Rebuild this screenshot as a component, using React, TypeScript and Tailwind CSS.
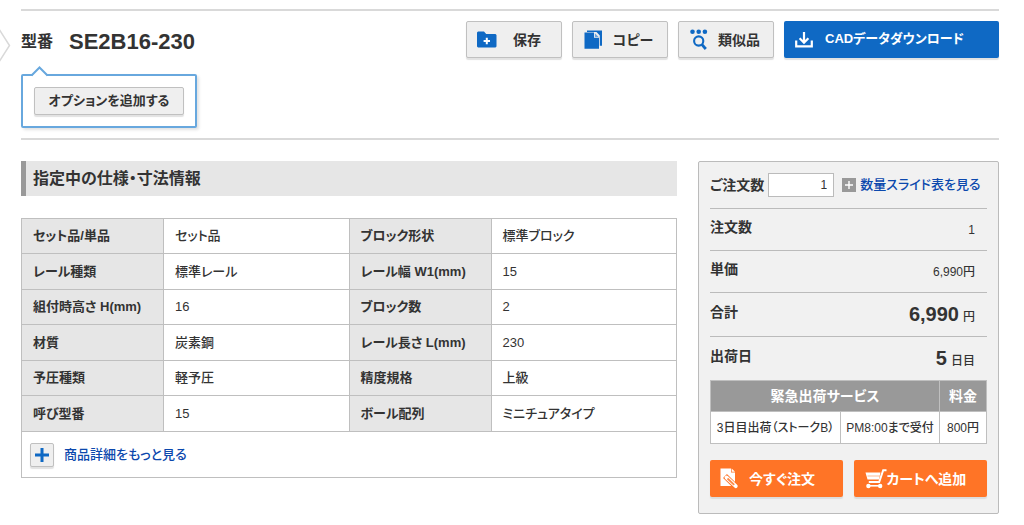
import type { ReactNode } from "react";

const specRows = [
  ["セット品/単品", "セット品", "ブロック形状", "標準ブロック"],
  ["レール種類", "標準レール", "レール幅 W1(mm)", "15"],
  ["組付時高さ H(mm)", "16", "ブロック数", "2"],
  ["材質", "炭素鋼", "レール長さ L(mm)", "230"],
  ["予圧種類", "軽予圧", "精度規格", "上級"],
  ["呼び型番", "15", "ボール配列", "ミニチュアタイプ"],
];

const grayButton =
  "rounded-xs border border-[#c0c0c0] bg-[#efefef] font-bold shadow-[0_2px_1px_#e2e2e2]";

function FolderIcon() {
  return (
    <svg width="20" height="17" viewBox="0 0 20 17" aria-hidden="true">
      <path d="M1 0.5H7L9.2 3H18.5L19.5 4V15.5L18.5 16.5H1L0 15.5V1.5z" fill="#0f69c4" />
      <path d="M9.8 6.8v6.4M6.6 10H13" stroke="#fff" strokeWidth="2" />
    </svg>
  );
}

function CopyIcon() {
  return (
    <svg width="19" height="19" viewBox="0 0 19 19" aria-hidden="true">
      <path d="M3 0.5H18V15.8H15.8V5.5L12.5 1.9H3z" fill="#0f69c4" />
      <path d="M0.5 2.6H10V7.8H15V18.7H0.5z" fill="#0f69c4" />
      <path d="M10.9 3.2L14.6 6.9H10.9z" fill="#6ba3dc" />
    </svg>
  );
}

function SimilarIcon() {
  return (
    <svg width="18" height="21" viewBox="0 0 18 21" aria-hidden="true">
      <g fill="#0f69c4">
        <circle cx="2.5" cy="2.7" r="2.3" />
        <circle cx="8.7" cy="2.7" r="2.3" />
        <circle cx="14.9" cy="2.7" r="2.3" />
      </g>
      <circle cx="8.7" cy="12" r="4.6" fill="none" stroke="#0f69c4" strokeWidth="2.1" />
      <path d="M11.8 15.4L15.8 20" stroke="#0f69c4" strokeWidth="2.8" />
    </svg>
  );
}

function DownloadIcon() {
  return (
    <svg width="18" height="16" viewBox="0 0 18 16" aria-hidden="true">
      <path d="M1.2 8.5V14.4H16.8V8.5" fill="none" stroke="#fff" strokeWidth="2.2" />
      <path d="M9 0V9" stroke="#fff" strokeWidth="2.2" />
      <path d="M4.6 6.2L9 10.6L13.4 6.2" fill="none" stroke="#fff" strokeWidth="2.2" />
    </svg>
  );
}

function OrderIcon() {
  return (
    <svg width="19" height="21" viewBox="0 0 19 21" aria-hidden="true">
      <path d="M0.5 0.5H11V4.6H15V18H0.5z" fill="#fff" />
      <path d="M11.7 0.5L15 3.8H11.7z" fill="#fff" />
      {/* Pencil: white rim around an orange body */}
      <path d="M5 8L15.5 18.3" stroke="#ff7426" strokeWidth="5.5" />
      <path d="M6.5 9.5L15.8 18.2" stroke="#fff" strokeWidth="3.8" strokeLinecap="round" />
      <path d="M7.5 10.5L14.2 16.8" stroke="#ff8a47" strokeWidth="1.8" />
    </svg>
  );
}

function CartIcon() {
  return (
    <svg width="22" height="20" viewBox="0 0 22 20" aria-hidden="true">
      <path d="M0.5 3.5H15.5L14 10.5H2.5z" fill="#fff" />
      <path d="M21.5 1.2H18.2L14.2 13H3.8" fill="none" stroke="#fff" strokeWidth="2" />
      <path d="M2.5 7H15" stroke="#ff9d66" strokeWidth="0.7" />
      <path d="M3 16.8H16" stroke="#fff" strokeWidth="1.6" />
      <circle cx="3.4" cy="17" r="2.2" fill="#fff" />
      <circle cx="15.2" cy="17" r="2.2" fill="#fff" />
    </svg>
  );
}

function ToolButton({ icon, label }: { icon: ReactNode; label: string }) {
  return (
    <button type="button" className={`${grayButton} flex h-[37px] w-24 items-center pr-1 pl-2.5 text-sm`}>
      <span className="flex w-5 justify-center">{icon}</span>
      <span className="flex-1 text-center">{label}</span>
    </button>
  );
}

function SummaryRow({ label, tall, children }: { label: string; tall?: boolean; children: ReactNode }) {
  return (
    <div className={`flex items-center justify-between border-t border-[#bbb] pr-3 ${tall ? "h-11" : "h-[42px]"}`}>
      <dt className="pb-1.5 text-sm font-bold">{label}</dt>
      <dd>{children}</dd>
    </div>
  );
}

function Header() {
  return (
    <header className="border-y-2 border-[#d9d9d9] py-2.5">
      <div className="flex h-[37px] items-center justify-between">
        <div className="flex items-center gap-4 pt-1">
          <span className="text-base font-bold">型番</span>
          <h1 className="text-[22px] leading-8 font-bold">SE2B16-230</h1>
        </div>
        <div className="flex gap-2.5">
          <ToolButton icon={<FolderIcon />} label="保存" />
          <ToolButton icon={<CopyIcon />} label="コピー" />
          <ToolButton icon={<SimilarIcon />} label="類似品" />
          <button
            type="button"
            className="flex h-[37px] w-[215px] items-center gap-3 rounded-xs bg-[#0f69c4] pl-[11px] text-[13px] font-bold text-white shadow-[0_2px_1px_#e2e2e2]"
          >
            <DownloadIcon />
            <span className="pb-0.5">CADデータダウンロード</span>
          </button>
        </div>
      </div>
      <div className="relative mt-4 inline-block rounded-xs border-2 border-[#68a8de] bg-white p-[11px] align-top shadow-[2px_2px_3px_#e2e2e2]">
        <svg className="absolute -top-2.5 left-2" width="17" height="11" viewBox="0 0 17 11" aria-hidden="true">
          <path d="M0 11L8.5 1.5L17 11z" fill="#fff" />
          <path d="M0.5 9.5L8.5 1.5L16.5 9.5" fill="none" stroke="#68a8de" strokeWidth="2" />
        </svg>
        <button type="button" className={`${grayButton} block h-7 w-[150px] text-[13px]`}>
          オプションを追加する
        </button>
      </div>
    </header>
  );
}

function SpecTable() {
  return (
    <section className="min-w-0 flex-1">
      <h2 className="flex h-[35px] items-center border-l-[5px] border-[#999] bg-[#e6e6e6] pl-[7px] text-base font-bold">
        指定中の仕様・寸法情報
      </h2>
      <table className="mt-[22px] w-full table-fixed border-collapse text-[13px]">
        <colgroup>
          <col className="w-[142px]" />
          <col />
          <col className="w-[142px]" />
          <col />
        </colgroup>
        <tbody>
          {specRows.map((row) => (
            <tr key={row[0]} className="odd:h-[35px] even:h-9">
              {row.map((cell, i) =>
                i % 2 === 0 ? (
                  <th
                    key={cell}
                    scope="row"
                    className="border border-[#bfbfbf] bg-[#e6e6e6] px-[11px] text-left font-bold whitespace-nowrap"
                  >
                    {cell}
                  </th>
                ) : (
                  <td key={i} className="border border-[#bfbfbf] px-[11px] font-medium">
                    {cell}
                  </td>
                ),
              )}
            </tr>
          ))}
          <tr className="h-[46px]">
            <td colSpan={4} className="border border-[#bfbfbf] px-2">
              <a href="#details" className="flex items-center gap-2.5 font-medium text-[#0b48ad]">
                <span className={`${grayButton} flex size-6 items-center justify-center`}>
                  <svg width="14" height="14" viewBox="0 0 14 14" aria-hidden="true">
                    <path d="M7 0V14M0 7H14" stroke="#0f69c4" strokeWidth="3" />
                  </svg>
                </span>
                商品詳細をもっと見る
              </a>
            </td>
          </tr>
        </tbody>
      </table>
    </section>
  );
}

function OrderPanel() {
  const orderButton =
    "flex h-[37px] flex-1 items-center rounded-xs bg-[#ff7426] text-sm font-bold text-white shadow-[0_2px_1px_#dcdcdc]";

  return (
    <aside className="w-[301px] shrink-0 rounded-xs border border-[#bbb] bg-[#f1f1f1] px-[11px] pt-[11px] pb-4 text-[13px]">
      <div className="mb-[11px] flex h-6 items-center">
        <label htmlFor="quantity" className="text-sm font-bold">
          ご注文数
        </label>
        <input
          id="quantity"
          type="text"
          defaultValue="1"
          className="ml-1 h-6 w-[66px] border border-[#bbb] bg-white px-1.5 text-right text-xs font-medium"
        />
        <a href="#slide" className="ml-2 flex items-center gap-1 font-medium whitespace-nowrap text-[#0b48ad]">
          <svg width="14" height="14" viewBox="0 0 14 14" aria-hidden="true">
            <path d="M0 0H14V14H0z" fill="#999" />
            <path d="M7 3V11M3 7H11" stroke="#fff" strokeWidth="1.4" />
          </svg>
          数量スライド表を見る
        </a>
      </div>
      <dl>
        <SummaryRow label="注文数">
          <span className="text-xs font-medium">1</span>
        </SummaryRow>
        <SummaryRow label="単価">
          <span className="text-xs font-medium">6,990円</span>
        </SummaryRow>
        <SummaryRow label="合計" tall>
          <span className="text-xl leading-6 font-bold">6,990</span>
          <span className="ml-1 text-xs font-medium">円</span>
        </SummaryRow>
        <SummaryRow label="出荷日" tall>
          <span className="text-xl leading-6 font-bold">5</span>
          <span className="ml-1 text-xs font-medium">日目</span>
        </SummaryRow>
      </dl>
      <table className="w-full border-collapse bg-white">
        <thead>
          <tr className="h-[31px] bg-[#999] text-sm text-white">
            <th scope="col" colSpan={2} className="border border-[#bfbfbf] font-bold">
              緊急出荷サービス
            </th>
            <th scope="col" className="w-[47px] border border-[#bfbfbf] font-bold">
              料金
            </th>
          </tr>
        </thead>
        <tbody>
          <tr className="h-8 text-center text-xs font-medium whitespace-nowrap">
            <td className="border border-[#bfbfbf]">3日目出荷（ストークB）</td>
            <td className="w-[99px] border border-[#bfbfbf]">PM8:00まで受付</td>
            <td className="border border-[#bfbfbf]">800円</td>
          </tr>
        </tbody>
      </table>
      <div className="mt-4 flex gap-[11px]">
        <button type="button" className={`${orderButton} gap-2.5 pl-2.5`}>
          <OrderIcon />
          今すぐ注文
        </button>
        <button type="button" className={`${orderButton} pl-[11px]`}>
          <CartIcon />
          カートへ追加
        </button>
      </div>
    </aside>
  );
}

export default function App() {
  return (
    <div className="relative bg-white pt-[9px] pr-[25px] pb-2.5 pl-[21px] font-['Liberation_Sans','Noto_Sans_CJK_JP',sans-serif] text-[#333] [font-feature-settings:'palt']">
      {/* Tip of the breadcrumb arrow that runs off the left edge */}
      <svg className="absolute top-7 left-0" width="11" height="36" viewBox="0 0 11 36" aria-hidden="true">
        <path d="M-1 1L9.5 17.5L-1 34" fill="none" stroke="#d9d9d9" strokeWidth="1.5" />
      </svg>
      <Header />
      <main className="mt-[21px] flex items-start gap-[21px]">
        <SpecTable />
        <OrderPanel />
      </main>
    </div>
  );
}
